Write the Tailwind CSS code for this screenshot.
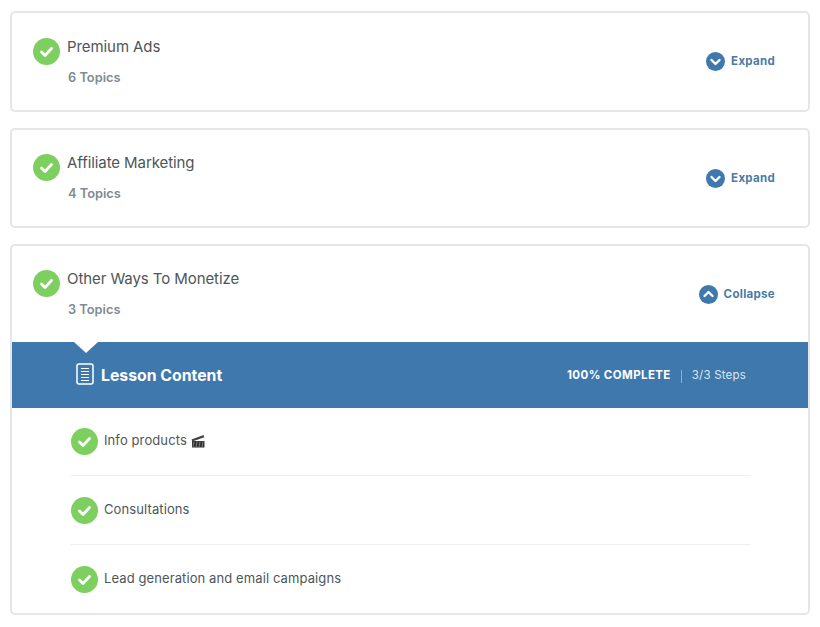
<!DOCTYPE html>
<html lang="en">
<head>
    <meta charset="UTF-8">
    <meta name="viewport" content="width=device-width, initial-scale=1.0">
    <title>Course Content</title>
    <script src="https://cdn.jsdelivr.net/npm/@tailwindcss/browser@4"></script>
</head>
<body class="bg-white font-['Inter',sans-serif]">
    <div class="w-[820px] h-[627px] overflow-hidden pt-[11px] pl-[10px] pr-[10px] flex flex-col gap-[16px]">

        <!-- Premium Ads -->
        <div class="h-[101px] border-2 border-[#e3e7eb] rounded-[5px] flex justify-between pl-[21px] pr-[33px] pt-[24px]">
            <div class="flex gap-[7px]">
                <svg class="w-[27px] h-[27px] mt-[1px]" viewBox="0 0 27 27"><circle cx="13.5" cy="13.5" r="13.5" fill="#7dcf5f"/><path d="M8.500 14l3.500 3.500 6.500-7" fill="none" stroke="#fff" stroke-width="2.800" stroke-linecap="round" stroke-linejoin="round"/></svg>
                <div>
                    <div class="text-[15px] leading-[20px] text-[#4d5659] tracking-[-0.08px]">Premium Ads</div>
                    <div class="text-[12.800px] leading-[16px] mt-[13px] ml-[1px] font-semibold text-[#7f8a92]">6 Topics</div>
                </div>
            </div>
            <div class="flex items-center gap-[6px] h-[20px] mt-[14px]">
                <svg class="w-[19px] h-[19px]" viewBox="0 0 19 19"><circle cx="9.5" cy="9.5" r="9.5" fill="#3e78ad"/><path d="M5.5 8l4 4 4-4" fill="none" stroke="#fff" stroke-width="2.4" stroke-linecap="round" stroke-linejoin="round"/></svg>
                <span class="text-[11.5px] font-bold text-[#4a7ba6] tracking-[0.3px] mt-[2px]">Expand</span>
            </div>
        </div>

        <!-- Affiliate Marketing -->
        <div class="h-[100px] border-2 border-[#e3e7eb] rounded-[5px] flex justify-between pl-[21px] pr-[33px] pt-[23px]">
            <div class="flex gap-[7px]">
                <svg class="w-[27px] h-[27px] mt-[1px]" viewBox="0 0 27 27"><circle cx="13.5" cy="13.5" r="13.5" fill="#7dcf5f"/><path d="M8.500 14l3.500 3.500 6.500-7" fill="none" stroke="#fff" stroke-width="2.800" stroke-linecap="round" stroke-linejoin="round"/></svg>
                <div>
                    <div class="text-[15px] leading-[20px] text-[#4d5659] tracking-[-0.08px]">Affiliate Marketing</div>
                    <div class="text-[12.800px] leading-[16px] mt-[13px] ml-[1px] font-semibold text-[#7f8a92]">4 Topics</div>
                </div>
            </div>
            <div class="flex items-center gap-[6px] h-[20px] mt-[15px]">
                <svg class="w-[19px] h-[19px]" viewBox="0 0 19 19"><circle cx="9.5" cy="9.5" r="9.5" fill="#3e78ad"/><path d="M5.5 8l4 4 4-4" fill="none" stroke="#fff" stroke-width="2.4" stroke-linecap="round" stroke-linejoin="round"/></svg>
                <span class="text-[11.5px] font-bold text-[#4a7ba6] tracking-[0.3px] mt-[2px]">Expand</span>
            </div>
        </div>

        <!-- Other Ways To Monetize -->
        <div class="h-[371px] border-2 border-[#e3e7eb] rounded-[5px] flex flex-col">
            <div class="h-[96px] flex justify-between pl-[21px] pr-[33px] pt-[23px]">
                <div class="flex gap-[7px]">
                    <svg class="w-[27px] h-[27px] mt-[1px]" viewBox="0 0 27 27"><circle cx="13.5" cy="13.5" r="13.5" fill="#7dcf5f"/><path d="M8.500 14l3.500 3.500 6.500-7" fill="none" stroke="#fff" stroke-width="2.800" stroke-linecap="round" stroke-linejoin="round"/></svg>
                    <div>
                        <div class="text-[15px] leading-[20px] text-[#4d5659] tracking-[-0.08px]">Other Ways To Monetize</div>
                        <div class="text-[12.800px] leading-[16px] mt-[13px] ml-[1px] font-semibold text-[#7f8a92]">3 Topics</div>
                    </div>
                </div>
                <div class="flex items-center gap-[6px] h-[20px] mt-[15px]">
                    <svg class="w-[19px] h-[19px]" viewBox="0 0 19 19"><circle cx="9.5" cy="9.5" r="9.5" fill="#3e78ad"/><path d="M5.5 11l4-4 4 4" fill="none" stroke="#fff" stroke-width="2.4" stroke-linecap="round" stroke-linejoin="round"/></svg>
                    <span class="text-[11.5px] font-bold text-[#4a7ba6] tracking-[0.3px] mt-[2px]">Collapse</span>
                </div>
            </div>

            <!-- Lesson bar -->
            <div class="relative h-[66px] bg-[#3e78ad] flex items-center justify-between pl-[64px] pr-[62px]">
                <div class="absolute left-[62px] top-0 w-0 h-0 border-l-[12px] border-r-[12px] border-t-[11px] border-l-transparent border-r-transparent border-t-white"></div>
                <div class="flex items-center gap-[7px]">
                    <svg class="w-[18px] h-[22px] mt-[-3px]" viewBox="0 0 18 22" fill="none" stroke="#fff"><rect x="1" y="1" width="16" height="20" rx="2" stroke-width="1.5"/><path d="M5 5.5h8M5 8.5h8M5 11.5h8M5 14.5h8M5 17.5h8" stroke-width="1.2"/></svg>
                    <span class="text-[15.800px] font-bold text-white mt-[1px]">Lesson Content</span>
                </div>
                <div class="flex items-center mt-[2px]">
                    <span class="text-[11.5px] font-bold text-white tracking-[0.4px]">100% COMPLETE</span>
                    <span class="w-px h-[13px] bg-white/40 mx-[10px]"></span>
                    <span class="text-[11.5px] text-[#dbe6f0] tracking-[0.2px]">3/3 Steps</span>
                </div>
            </div>

            <!-- Steps -->
            <div class="ml-[59px] mr-[57px] flex flex-col">
                <div class="h-[68px] flex items-center gap-[6px] border-b border-[#eceff1]">
                    <svg class="w-[27px] h-[27px]" viewBox="0 0 27 27"><circle cx="13.5" cy="13.5" r="13.5" fill="#7dcf5f"/><path d="M8.500 14l3.500 3.500 6.500-7" fill="none" stroke="#fff" stroke-width="2.800" stroke-linecap="round" stroke-linejoin="round"/></svg>
                    <span class="text-[13px] text-[#4d5659] tracking-[0.1px] mt-[-1px]">Info products</span>
                    <svg class="w-[14px] h-[14px] ml-[-2px] mt-[-2px]" viewBox="0 0 14 14"><path d="M.5 5.500L12.500 1l.8 2.200L1.300 7.600z" fill="#444"/><rect x="1" y="7" width="12.500" height="6.500" fill="#333"/><path d="M3 7.500l-1 6M6 7.500l-1 6M9 7.500l-1 6M12 7.500l-1 6" stroke="#999" stroke-width=".7"/></svg>
                </div>
                <div class="h-[69px] flex items-center gap-[6px] border-b border-[#eceff1]">
                    <svg class="w-[27px] h-[27px]" viewBox="0 0 27 27"><circle cx="13.5" cy="13.5" r="13.5" fill="#7dcf5f"/><path d="M8.500 14l3.500 3.500 6.500-7" fill="none" stroke="#fff" stroke-width="2.800" stroke-linecap="round" stroke-linejoin="round"/></svg>
                    <span class="text-[13px] text-[#4d5659] tracking-[0.1px]">Consultations</span>
                </div>
                <div class="h-[68px] flex items-center gap-[6px]">
                    <svg class="w-[27px] h-[27px]" viewBox="0 0 27 27"><circle cx="13.5" cy="13.5" r="13.5" fill="#7dcf5f"/><path d="M8.500 14l3.500 3.500 6.500-7" fill="none" stroke="#fff" stroke-width="2.800" stroke-linecap="round" stroke-linejoin="round"/></svg>
                    <span class="text-[13px] text-[#4d5659] tracking-[0.1px]">Lead generation and email campaigns</span>
                </div>
            </div>
        </div>
    </div>
</body>
</html>
